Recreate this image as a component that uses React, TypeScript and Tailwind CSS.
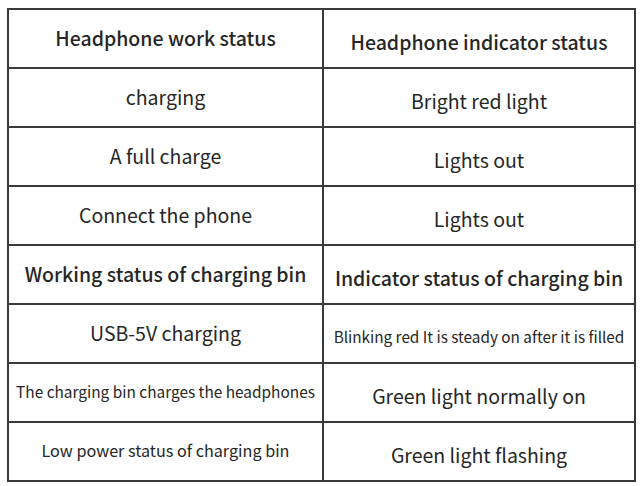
const rows: { left: string; right: string; head?: boolean; leftCls?: string; rightCls?: string }[] = [
  { left: "Headphone work status", right: "Headphone indicator status", head: true },
  { left: "charging", right: "Bright red light" },
  { left: "A full charge", right: "Lights out" },
  { left: "Connect the phone", right: "Lights out" },
  { left: "Working status of charging bin", right: "Indicator status of charging bin", head: true },
  { left: "USB-5V charging", right: "Blinking red It is steady on after it is filled", rightCls: "text-[15.3px]" },
  { left: "The charging bin charges the headphones", right: "Green light normally on", leftCls: "text-[15.4px]" },
  { left: "Low power status of charging bin", right: "Green light flashing", leftCls: "text-[16.2px]" },
];

export default function App() {
  return (
    <div className="w-[642px] h-[486px] bg-white pt-[8px] pl-[7px] font-['Noto_Sans_CJK_SC',sans-serif] text-[#262626] leading-none">
      <table className="border-collapse border-2 border-[#3a3a3a] w-[629px] table-fixed">
        <tbody>
          {rows.map((r, i) => (
            <tr key={i} className="h-[59px]">
              <td
                className={`border-2 border-[#3a3a3a] w-[315px] text-center align-middle p-0 pb-[2px] whitespace-nowrap ${
                  r.head ? "font-medium" : ""
                } ${r.leftCls ?? "text-[19.5px]"}`}
              >
                {r.left}
              </td>
              <td
                className={`border-2 border-[#3a3a3a] text-center align-middle p-0 pt-[6px] whitespace-nowrap ${
                  r.head ? "font-medium" : ""
                } ${r.rightCls ?? "text-[19.5px]"}`}
              >
                {r.right}
              </td>
            </tr>
          ))}
        </tbody>
      </table>
    </div>
  );
}
